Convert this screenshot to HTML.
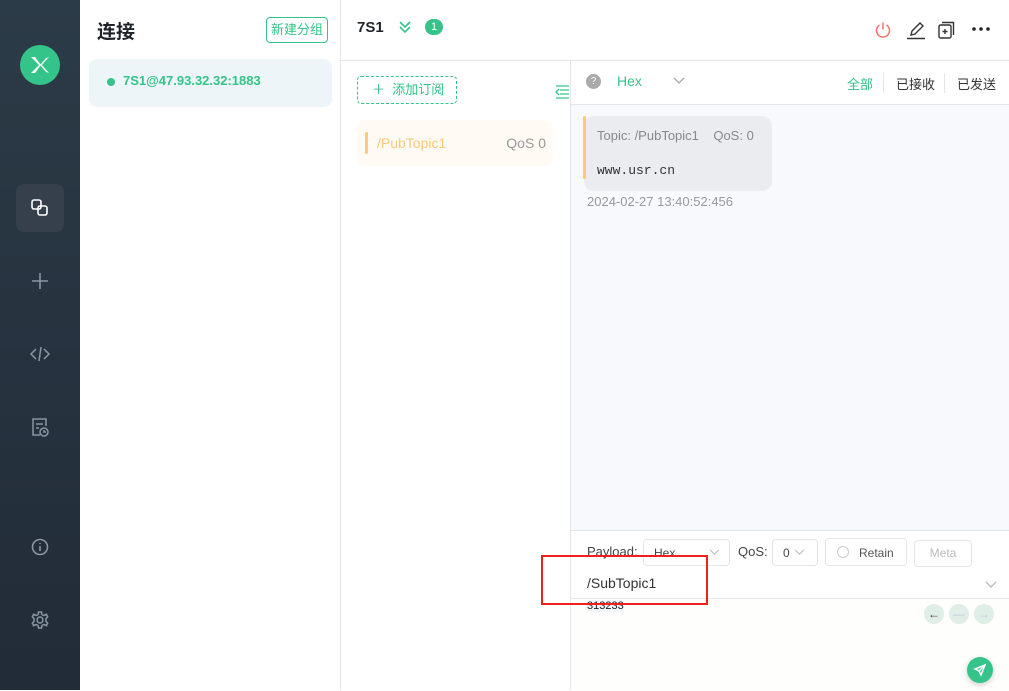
<!DOCTYPE html>
<html><head><meta charset="utf-8"><style>
*{box-sizing:border-box;margin:0;padding:0}
body{width:1009px;height:690px;overflow:hidden;font-family:"Liberation Sans","Noto Sans CJK SC",sans-serif;background:#fff;position:relative}
.abs{position:absolute}
.side{left:0;top:0;width:80px;height:690px;background:linear-gradient(#2b3b47,#222b38)}
.ico{position:absolute;left:16px;width:48px;height:48px;display:flex;align-items:center;justify-content:center}
</style></head><body>
<div class="abs side">
  <div class="abs" style="left:20px;top:45px;width:40px;height:40px;border-radius:50%;background:#34c388">
    <svg width="40" height="40" viewBox="0 0 40 40"><path d="M11 12 L19 20 L11 28 L15 28 L21 20 L15 12Z" fill="#fff"/><path d="M29 12 L22 20 L29 28 L26 27 L20 20 L26 13Z" fill="#e8f8f0"/></svg>
  </div>
  <div class="ico" style="top:184px;background:#363f4c;border-radius:8px">
    <svg width="20" height="20" viewBox="0 0 20 20" fill="none" stroke="#fff" stroke-width="1.6"><rect x="2" y="2" width="9" height="9" rx="2"/><rect x="8" y="8" width="9" height="9" rx="2"/></svg></div>
  <div class="ico" style="top:257px"><svg width="20" height="20" viewBox="0 0 20 20" stroke="#8a96a3" stroke-width="1.6"><path d="M10 2V18M2 10H18"/></svg></div>
  <div class="ico" style="top:330px"><svg width="24" height="20" viewBox="0 0 24 20" fill="none" stroke="#8a96a3" stroke-width="1.5"><path d="M8 5L3 10L8 15M16 5L21 10L16 15M13 3L11 17"/></svg></div>
  <div class="ico" style="top:403px"><svg width="20" height="22" viewBox="0 0 20 22" fill="none" stroke="#8a96a3" stroke-width="1.5"><path d="M10 19H3V3H16V10M6 8H13M6 12H9"/><circle cx="14" cy="16" r="4"/><path d="M14 14V16H16"/></svg></div>
  <div class="ico" style="top:523px"><svg width="20" height="20" viewBox="0 0 20 20" fill="none" stroke="#8a96a3" stroke-width="1.6"><circle cx="10" cy="10" r="7.5"/><path d="M10 9V14M10 6V7"/></svg></div>
  <div class="ico" style="top:596px"><svg width="20" height="20" viewBox="0 0 20 20" fill="none" stroke="#8a96a3" stroke-width="1.5"><circle cx="10" cy="10" r="3"/><path d="M8.5 2H11.5L12 4.5L14 5.5L16.3 4.3L17.7 6.8L16 8.6V11.4L17.7 13.2L16.3 15.7L14 14.5L12 15.5L11.5 18H8.5L8 15.5L6 14.5L3.7 15.7L2.3 13.2L4 11.4V8.6L2.3 6.8L3.7 4.3L6 5.5L8 4.5Z"/></svg></div>
</div>
<div class="abs" style="left:80px;top:0;width:261px;height:690px;border-right:1px solid #e4e6ea;background:#fff">
  <div class="abs" style="left:17px;top:17px;font-size:19px;font-weight:bold;color:#1f2329">连接</div>
  <div class="abs" style="left:186px;top:17px;width:62px;height:26px;border:1px solid #34c388;border-radius:4px;color:#34c388;font-size:13px;line-height:24px;text-align:center">新建分组</div>
  <div class="abs" style="left:9px;top:59px;width:243px;height:48px;background:#eef5f8;border-radius:8px">
    <div class="abs" style="left:18px;top:19px;width:8px;height:8px;border-radius:50%;background:#34c388"></div>
    <div class="abs" style="left:34px;top:14px;font-size:13px;font-weight:bold;color:#34c388">7S1@47.93.32.32:1883</div>
  </div>
</div>
<div class="abs" style="left:341px;top:0;width:668px;height:61px;border-bottom:1px solid #e4e6ea">
  <div class="abs" style="left:16px;top:19px;font-size:15px;font-weight:bold;color:#1f2329">7S1</div>
  <svg class="abs" style="left:57px;top:20px" width="14" height="14" viewBox="0 0 14 14" fill="none" stroke="#34c388" stroke-width="1.6"><path d="M2 2L7 7L12 2M2 7L7 12L12 7"/></svg>
  <div class="abs" style="left:84px;top:19px;width:18px;height:16px;border-radius:8px;background:#34c388;color:#fff;font-size:11px;text-align:center;line-height:16px">1</div>
  <svg class="abs" style="left:533px;top:21px" width="18" height="18" viewBox="0 0 18 18" fill="none" stroke="#f0766d" stroke-width="1.5"><path d="M5.5 4A6.5 6.5 0 1 0 12.5 4M9 1.5V8.5"/></svg>
  <svg class="abs" style="left:565px;top:20px" width="20" height="20" viewBox="0 0 20 20" fill="none" stroke="#333" stroke-width="1.4"><path d="M5 15L6 11L14 3L17 6L9 14Z M1 18.5H19"/></svg>
  <svg class="abs" style="left:596px;top:20px" width="20" height="20" viewBox="0 0 20 20" fill="none" stroke="#333" stroke-width="1.4"><rect x="2" y="5" width="12" height="13" rx="1.5"/><path d="M5 2.5H16.5V15M8 9V14M5.5 11.5H10.5"/></svg>
  <svg class="abs" style="left:630px;top:26px" width="20" height="6" viewBox="0 0 20 6" fill="#222"><circle cx="3" cy="3" r="1.8"/><circle cx="10" cy="3" r="1.8"/><circle cx="17" cy="3" r="1.8"/></svg>
</div>
<div class="abs" style="left:341px;top:61px;width:230px;height:629px;border-right:1px solid #e4e6ea">
  <div class="abs" style="left:16px;top:15px;width:100px;height:28px;border:1px dashed #34c388;border-radius:4px;color:#34c388;font-size:13px;line-height:26px;padding-left:14px">＋&nbsp; 添加订阅</div>
  <svg class="abs" style="left:214px;top:24px" width="14" height="14" viewBox="0 0 14 14" fill="none" stroke="#34c388" stroke-width="1.3"><path d="M1 1H14M5 5H14M5 9H14M1 13H14M4 4L1 7L4 10"/></svg>
  <div class="abs" style="left:16px;top:59px;width:196px;height:46px;background:#fffaf3;border-radius:8px">
    <div class="abs" style="left:8px;top:12px;width:3px;height:22px;background:#fdc97a;border-radius:2px"></div>
    <div class="abs" style="left:20px;top:15px;font-size:14px;color:#fdc97a">/PubTopic1</div>
    <div class="abs" style="right:7px;top:15px;font-size:14px;color:#999">QoS 0</div>
  </div>
</div>
<div class="abs" style="left:571px;top:61px;width:438px;height:469px;background:#f8f9fc">
  <div class="abs" style="left:0;top:0;width:438px;height:44px;background:#fff;border-bottom:1px solid #e4e6ea">
    <div class="abs" style="left:15px;top:13px;width:15px;height:15px;border-radius:50%;background:#aaa;color:#fff;font-size:10px;text-align:center;line-height:15px">?</div>
    <div class="abs" style="left:46px;top:12px;font-size:14px;color:#34c388">Hex</div>
    <svg class="abs" style="left:102px;top:16px" width="12" height="8" viewBox="0 0 12 8" fill="none" stroke="#aaa" stroke-width="1.3"><path d="M1 1L6 6L11 1"/></svg>
    <div class="abs" style="left:276px;top:13px;font-size:13px;color:#34c388">全部</div>
    <div class="abs" style="left:312px;top:12px;width:1px;height:20px;background:#e4e6ea"></div>
    <div class="abs" style="left:325px;top:13px;font-size:13px;color:#333">已接收</div>
    <div class="abs" style="left:373px;top:12px;width:1px;height:20px;background:#e4e6ea"></div>
    <div class="abs" style="left:386px;top:13px;font-size:13px;color:#333">已发送</div>
  </div>
  <div class="abs" style="left:13px;top:55px;width:188px;height:75px;background:#ebecf0;border-radius:10px">
    <div class="abs" style="left:-1px;top:0;width:3px;height:63px;background:#fdc97a;border-radius:2px"></div>
    <div class="abs" style="left:13px;top:12px;font-size:13px;color:#888">Topic: /PubTopic1&nbsp;&nbsp;&nbsp;&nbsp;QoS: 0</div>
    <div class="abs" style="left:13px;top:47px;font-size:13px;color:#333;font-family:'Liberation Mono',monospace">www.usr.cn</div>
  </div>
  <div class="abs" style="left:16px;top:133px;font-size:13px;color:#999">2024-02-27 13:40:52:456</div>
</div>
<div class="abs" style="left:571px;top:530px;width:438px;height:160px;background:#fff;border-top:1px solid #e4e6ea">
  <div class="abs" style="left:16px;top:13px;font-size:13px;color:#444">Payload:</div>
  <div class="abs" style="left:72px;top:8px;width:87px;height:27px;border:1px solid #e4e6ea;border-radius:4px;font-size:12px;color:#444;padding:6px 10px">Hex</div>
  <svg class="abs" style="left:138px;top:18px" width="11" height="7" viewBox="0 0 12 8" fill="none" stroke="#bbb" stroke-width="1.3"><path d="M1 1L6 6L11 1"/></svg>
  <div class="abs" style="left:167px;top:13px;font-size:13px;color:#444">QoS:</div>
  <div class="abs" style="left:201px;top:8px;width:46px;height:27px;border:1px solid #e4e6ea;border-radius:4px;font-size:12px;color:#444;padding:6px 10px">0</div>
  <svg class="abs" style="left:223px;top:18px" width="11" height="7" viewBox="0 0 12 8" fill="none" stroke="#bbb" stroke-width="1.3"><path d="M1 1L6 6L11 1"/></svg>
  <div class="abs" style="left:254px;top:7px;width:82px;height:28px;border:1px solid #e4e6ea;border-radius:4px;font-size:12px;color:#555;padding:7px 0 0 33px">Retain</div>
  <div class="abs" style="left:266px;top:15px;width:12px;height:12px;border:1px solid #ccc;border-radius:50%"></div>
  <div class="abs" style="left:343px;top:9px;width:58px;height:27px;border:1px solid #e4e6ea;border-radius:4px;font-size:12px;color:#bbb;text-align:center;line-height:25px">Meta</div>
  <div class="abs" style="left:16px;top:44px;font-size:14px;color:#333">/SubTopic1</div>
  <svg class="abs" style="left:414px;top:50px" width="12" height="8" viewBox="0 0 12 8" fill="none" stroke="#bbb" stroke-width="1.3"><path d="M1 1L6 6L11 1"/></svg>
  <div class="abs" style="left:0;top:67px;width:438px;height:93px;background:#fefffd;border-top:1px solid #e4e6ea">
    <div class="abs" style="left:16px;top:1px;font-size:11px;color:#222;background:#f2f6fb;line-height:12px">313233</div>
    <div class="abs" style="left:353px;top:5px;width:20px;height:20px;border-radius:50%;background:#dfeee6;color:#445;font-size:12px;text-align:center;line-height:20px">←</div>
    <div class="abs" style="left:378px;top:5px;width:20px;height:20px;border-radius:50%;background:#dfeee6;color:#bcd;font-size:12px;text-align:center;line-height:20px">—</div>
    <div class="abs" style="left:403px;top:5px;width:20px;height:20px;border-radius:50%;background:#dfeee6;color:#bcd;font-size:12px;text-align:center;line-height:20px">→</div>
    <div class="abs" style="left:396px;top:58px;width:26px;height:26px;border-radius:50%;background:#34c388;box-shadow:0 2px 6px rgba(0,0,0,.2)">
      <svg width="26" height="26" viewBox="0 0 26 26" fill="none" stroke="#fff" stroke-width="1.5"><path d="M8 12L18 8L14 18L12 14Z M12 14L18 8"/></svg>
    </div>
  </div>
</div>
<div class="abs" style="left:541px;top:555px;width:167px;height:50px;border:2px solid #f0201c"></div>
</body></html>
